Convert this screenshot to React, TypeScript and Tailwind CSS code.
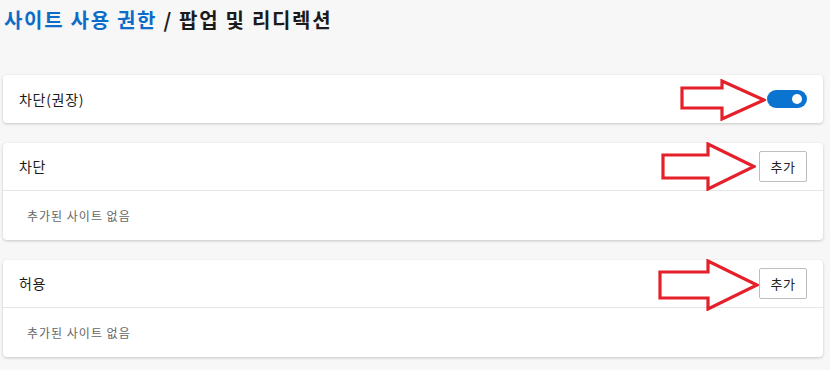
import React from 'react';

const FONT = "font-['Malgun_Gothic','Noto_Sans_CJK_KR',sans-serif]";

type ArrowProps = { left: number; top: number; w: number; h: number; shaftTop: number; shaftBottom: number; headX: number };

// red outlined callout arrow drawn over the page
const Arrow: React.FC<ArrowProps> = ({ left, top, w, h, shaftTop, shaftBottom, headX }) => {
  const mid = h / 2;
  const pts = [
    [2, shaftTop], [headX, shaftTop], [headX, 2], [w - 2, mid],
    [headX, h - 2], [headX, shaftBottom], [2, shaftBottom],
  ].map(p => p.join(',')).join(' ');
  return (
    <svg className="absolute" style={{ left, top }} width={w} height={h} viewBox={`0 0 ${w} ${h}`}>
      <polygon points={pts} fill="white" stroke="#e5202a" strokeWidth="3.2" strokeLinejoin="miter" />
    </svg>
  );
};

const AddButton = () => (
  <button className="w-[48px] h-[31px] border border-[#bdbdbd] rounded-[2px] bg-white text-[13px] tracking-[0.5px] text-[#222]">
    추가
  </button>
);

const ListCard: React.FC<{ title: string }> = ({ title }) => (
  <div className="bg-white rounded-[4px] shadow-[0_1px_3px_rgba(0,0,0,0.2)]">
    <div className="h-[48px] flex items-center justify-between pl-4 pr-[16px] border-b border-[#e6e6e6]">
      <span className="text-[14px] tracking-[0.7px] text-[#1b1b1b]">{title}</span>
      <AddButton />
    </div>
    <div className="h-[49px] flex items-center pl-6 text-[12px] tracking-[1px] text-[#666]">추가된 사이트 없음</div>
  </div>
);

export default function App() {
  return (
    <div className={`relative min-h-screen bg-[#f7f7f7] ${FONT}`}>
      <div className="pl-1 pt-[6px] h-[75px] text-[20px] font-semibold leading-[28px] tracking-[1.7px]">
        <span className="text-[#0e6cc9]">사이트 사용 권한</span>
        <span className="text-[#1b1b1b]"> / 팝업 및 리디렉션</span>
      </div>

      <div className="ml-[3px] w-[820px] flex flex-col gap-5">
        <div className="h-[48px] bg-white rounded-[4px] shadow-[0_1px_3px_rgba(0,0,0,0.2)] flex items-center justify-between pl-4 pr-4">
          <span className="text-[14px] tracking-[0.7px] text-[#1b1b1b]">차단(권장)</span>
          <div className="w-[40px] h-[18px] rounded-full bg-[#0a74d0] flex items-center justify-end pr-[5px]">
            <div className="w-[10px] h-[10px] rounded-full bg-white" />
          </div>
        </div>
        <ListCard title="차단" />
        <ListCard title="허용" />
      </div>

      <Arrow left={680} top={79} w={86} h={42} shaftTop={9} shaftBottom={29} headX={42} />
      <Arrow left={661} top={142} w={95} h={49} shaftTop={13} shaftBottom={36} headX={47} />
      <Arrow left={658} top={259} w={101} h={52} shaftTop={13} shaftBottom={39} headX={50} />
    </div>
  );
}
